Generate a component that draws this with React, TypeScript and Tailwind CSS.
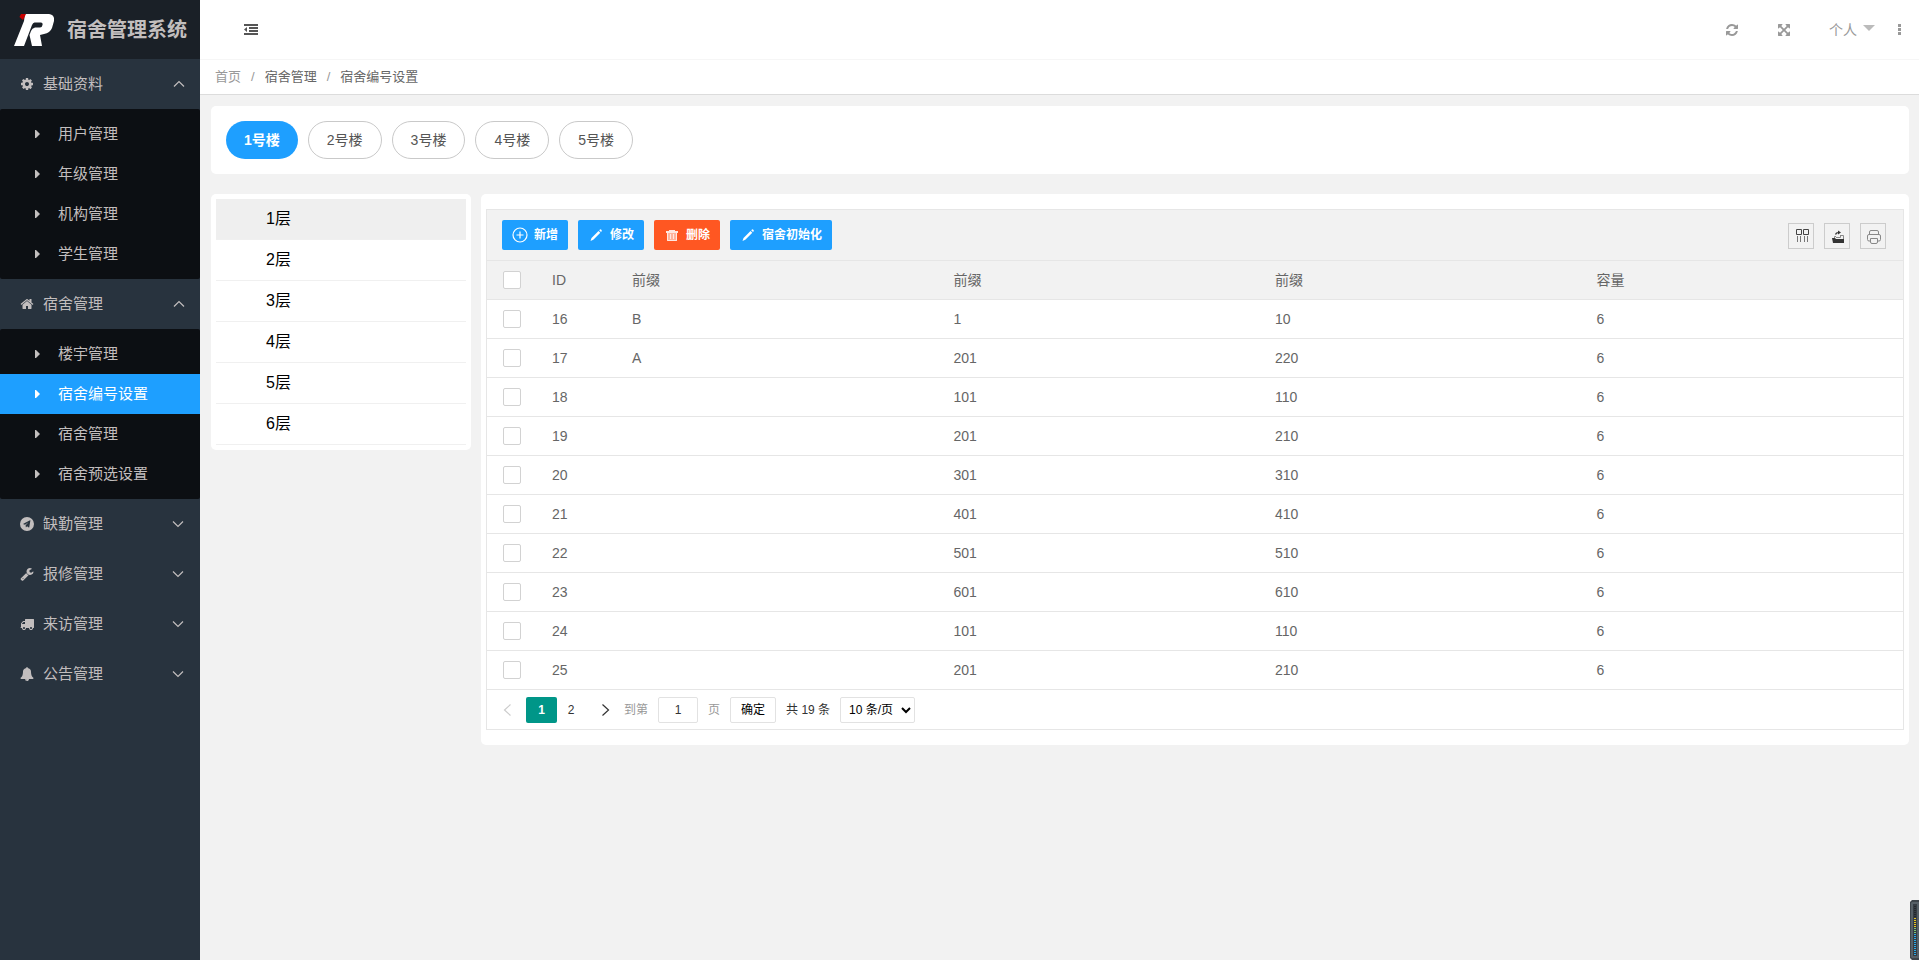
import React, { useState } from 'react';
import clsx from 'clsx';

const ICONS = {
  cog: 'M1152 896q0-106-75-181t-181-75-181 75-75 181 75 181 181 75 181-75 75-181zm512-109v222q0 12-8 23t-20 13l-185 28q-19 54-39 91 35 50 107 138 10 12 10 25t-9 23q-27 37-99 108t-94 71q-12 0-26-9l-138-108q-44 23-91 38-16 136-29 186-7 28-36 28h-222q-14 0-24.5-8.5t-11.5-21.5l-28-184q-49-16-90-37l-141 107q-10 9-25 9-14 0-25-11-126-114-165-168-7-10-7-23 0-12 8-23 15-21 51-66.5t54-70.5q-27-50-41-99l-183-27q-13-2-21-12.5t-8-23.5v-222q0-12 8-23t19-13l186-28q14-46 39-92-40-57-107-138-10-12-10-24 0-10 9-23 26-36 98.5-107.5t94.5-71.5q13 0 26 10l138 107q44-23 91-38 16-136 29-186 7-28 36-28h222q14 0 24.5 8.5t11.5 21.5l28 184q49 16 90 37l142-107q9-9 24-9 13 0 25 10 129 119 165 170 7 8 7 22 0 12-8 23-15 21-51 66.5t-54 70.5q26 50 41 98l183 28q13 2 21 12.5t8 23.5z',
  home: 'M1472 992v480q0 26-19 45t-45 19h-384v-384h-256v384h-384q-26 0-45-19t-19-45v-480q0-1 .5-3t.5-3l575-474 575 474q1 2 1 6zm223-69l-62 74q-8 9-21 11h-3q-13 0-21-7l-692-577-692 577q-12 8-24 7-13-2-21-11l-62-74q-8-10-7-23.5t11-21.5l719-599q32-26 76-26t76 26l244 204v-195q0-14 9-23t23-9h192q14 0 23 9t9 23v408l219 182q10 8 11 21.5t-7 23.5z',
  telegram: 'M896 0a896 896 0 1 0 0 1792a896 896 0 1 0 0-1792zM1330 450l-148 850q-10 57-62 30l-220-160-116 132q-30 22-42-22l-20-240 360-380-440 330-205-75q-40-18-2-50l850-445q52-24 45 30z',
  wrench: 'M448 1472q0-26-19-45t-45-19-45 19-19 45 19 45 45 19 45-19 19-45zm644-420l-682 682q-37 37-90 37-52 0-91-37l-106-108q-38-36-38-90 0-53 38-91l681-681q39 98 114.5 173.5t173.5 114.5zm634-435q0 39-23 106-47 134-164.5 217.5t-258.5 83.5q-185 0-316.5-131.5t-131.5-316.5 131.5-316.5 316.5-131.5q58 0 121.5 16.5t107.5 46.5q16 11 16 28t-16 28l-293 169v224l193 107q5-3 79-48.5t135.5-81 70.5-35.5q15 0 23.5 10t8.5 25z',
  truck: 'M640 1408q0-52-38-90t-90-38-90 38-38 90 38 90 90 38 90-38 38-90zm-384-512h384v-256h-158q-13 0-22 9l-195 195q-9 9-9 22v30zm1280 512q0-52-38-90t-90-38-90 38-38 90 38 90 90 38 90-38 38-90zm256-1088v1024q0 15-4 26.5t-13.5 18.5-16.5 11.5-23.5 6-22.5 2-25.5 0-22.5-.5q0 106-75 181t-181 75-181-75-75-181h-384q0 106-75 181t-181 75-181-75-75-181h-64q-3 0-22.5.5t-25.5 0-22.5-2-23.5-6-16.5-11.5-13.5-18.5-4-26.5q0-26 19-45t45-19v-320q0-8-.5-35t0-38 2.5-34.5 6.5-37 14-30.5 22.5-30l198-198q19-19 50.5-32t58.5-13h160v-192q0-26 19-45t45-19h1024q26 0 45 19t19 45z',
  bell: 'M912 1696q0-16-16-16-59 0-101.5-42.5t-42.5-101.5q0-16-16-16t-16 16q0 73 51.5 124.5t124.5 51.5q16 0 16-16zm816-288q0 52-38 90t-90 38h-448q0 106-75 181t-181 75-181-75-75-181h-448q-52 0-90-38t-38-90q50-42 91-88t85-119.5 74.5-158.5 50-206 19.5-260q0-152 117-282.5t307-158.5q-8-19-8-39 0-40 28-68t68-28 68 28 28 68q0 20-8 39 190 28 307 158.5t117 282.5q0 139 19.5 260t50 206 74.5 158.5 85 119.5 91 88z',
  refresh: 'M1639 1056q0 5-1 7-64 268-268 434.5t-478 166.5q-146 0-282.5-55t-243.5-157l-129 129q-19 19-45 19t-45-19-19-45v-448q0-26 19-45t45-19h448q26 0 45 19t19 45-19 45l-137 137q71 66 161 102t187 36q134 0 250-65t186-179q11-17 53-117 8-23 30-23h192q13 0 22.5 9.5t9.5 22.5zm25-800v448q0 26-19 45t-45 19h-448q-26 0-45-19t-19-45 19-45l138-138q-148-137-349-137-134 0-250 65t-186 179q-11 17-53 117-8 23-30 23h-199q-13 0-22.5-9.5t-9.5-22.5v-7q65-268 270-434.5t480-166.5q146 0 284 55.5t245 156.5l130-129q19-19 45-19t45 19 19 45z',
  arrows: 'M1411 541l-355 355 355 355 144-144q29-31 70-14 39 17 39 59v448q0 26-19 45t-45 19h-448q-42 0-59-40-17-39 14-69l144-144-355-355-355 355 144 144q31 30 14 69-17 40-59 40h-448q-26 0-45-19t-19-45v-448q0-42 40-59 39-17 69 14l144 144 355-355-355-355-144 144q-19 19-45 19-12 0-24-5-40-17-40-59v-448q0-26 19-45t45-19h448q42 0 59 40 17 39-14 69l-144 144 355 355 355-355-144-144q-31-30-14-69 17-40 59-40h448q26 0 45 19t19 45v448q0 42-39 59-13 5-25 5-26 0-45-19z',
};

type IconName = keyof typeof ICONS;

const Icon: React.FC<{ name: IconName; className?: string }> = ({ name, className }) => (
  <svg viewBox="0 0 1792 1792" fill="currentColor" fillRule="evenodd" className={clsx('size-[14px] shrink-0', className)} aria-hidden="true">
    <path d={ICONS[name]} />
  </svg>
);

const Chevron: React.FC<{ d: string; className?: string }> = ({ d, className }) => (
  <svg viewBox="0 0 12 12" fill="none" stroke="currentColor" strokeWidth="1.200" className={clsx('size-3 shrink-0', className)} aria-hidden="true">
    <path d={d} />
  </svg>
);

interface MenuGroup {
  label: string;
  icon: IconName;
  children?: string[];
}

const menu: MenuGroup[] = [
  { label: '基础资料', icon: 'cog', children: ['用户管理', '年级管理', '机构管理', '学生管理'] },
  { label: '宿舍管理', icon: 'home', children: ['楼宇管理', '宿舍编号设置', '宿舍管理', '宿舍预选设置'] },
  { label: '缺勤管理', icon: 'telegram' },
  { label: '报修管理', icon: 'wrench' },
  { label: '来访管理', icon: 'truck' },
  { label: '公告管理', icon: 'bell' },
];

const buildings = ['1号楼', '2号楼', '3号楼', '4号楼', '5号楼'];
const floors = ['1层', '2层', '3层', '4层', '5层', '6层'];

const rows = [
  { id: 16, prefix: 'B', start: 1, end: 10, size: 6 },
  { id: 17, prefix: 'A', start: 201, end: 220, size: 6 },
  { id: 18, prefix: '', start: 101, end: 110, size: 6 },
  { id: 19, prefix: '', start: 201, end: 210, size: 6 },
  { id: 20, prefix: '', start: 301, end: 310, size: 6 },
  { id: 21, prefix: '', start: 401, end: 410, size: 6 },
  { id: 22, prefix: '', start: 501, end: 510, size: 6 },
  { id: 23, prefix: '', start: 601, end: 610, size: 6 },
  { id: 24, prefix: '', start: 101, end: 110, size: 6 },
  { id: 25, prefix: '', start: 201, end: 210, size: 6 },
];

const Sidebar: React.FC = () => (
  <aside className="w-[200px] shrink-0 bg-[#28333e] text-[#c2bebe]">
    <div className="flex h-[59px] items-center gap-[13px] bg-[#1a2027] pl-[13px]">
      <svg viewBox="0 0 41 34" className="h-[34px] w-[41px] shrink-0" aria-hidden="true">
        <path
          fill="#fff"
          d="M12 1H36Q42 2 41 8L39 15Q37 20 31 21L27 22L29 33H19L16.500 22L18 18Q19 15 22 14.500H27Q29 14.500 29.500 12Q30 9.500 28 9.500H21.500Q20 9.500 19 12L11 33H1L11 8Z"
        />
        <path fill="#c80000" d="M8 1H13L10 7L6.500 4Z" />
      </svg>
      <h1 className="text-[20px] font-bold leading-none whitespace-nowrap">宿舍管理系统</h1>
    </div>
    <nav className="text-[15px]">
      {menu.map(({ label, icon, children }) => (
        <div key={label}>
          <a href="#" className="flex h-[50px] items-center pr-[15px] pl-5">
            <Icon name={icon} />
            <span className="ml-[9px] flex-1">{label}</span>
            <Chevron d={children ? 'M1 8.5L6 3.5L11 8.5' : 'M1 3.5L6 8.5L11 3.5'} className={children ? '' : 'mr-px'} />
          </a>
          {children && (
            <ul className="rounded-[2px] bg-[#0c0f13] py-[5px]">
              {children.map((child) => (
                <li key={child}>
                  <a
                    href="#"
                    className={clsx('flex h-10 items-center gap-[18px] pl-[35px]', child === '宿舍编号设置' && 'bg-[#1e9fff] text-white')}
                  >
                    <svg viewBox="0 0 5 8" fill="currentColor" className="h-2 w-[5px]" aria-hidden="true">
                      <path d="M0 0H1L5 4L1 8H0Z" />
                    </svg>
                    {child}
                  </a>
                </li>
              ))}
            </ul>
          )}
        </div>
      ))}
    </nav>
  </aside>
);

const Header: React.FC = () => (
  <header>
    <div className="flex h-[60px] items-center justify-between border-b border-[#f6f6f6] bg-white pr-[18px] pl-11 text-[#999]">
      <button aria-label="收起菜单" className="text-[#555]">
        <svg viewBox="0 0 14 11" fill="currentColor" className="h-[11px] w-[14px]" aria-hidden="true">
          <path d="M0 0H14V2H0ZM5 3H14V5H5ZM5 6H14V8H5ZM0 9H14V11H0ZM3 3V8L0 5.5Z" />
        </svg>
      </button>
      <div className="flex items-center text-sm">
        <button aria-label="刷新" className="mr-[38px]">
          <Icon name="refresh" />
        </button>
        <button aria-label="全屏" className="mr-[38px]">
          <Icon name="arrows" />
        </button>
        <button className="mr-[23px] flex items-center gap-[6px]">
          个人
          <svg viewBox="0 0 12 6" fill="#bbb" className="mb-[3px] h-[6px] w-3" aria-hidden="true">
            <path d="M0 0H12L6 6Z" />
          </svg>
        </button>
        <button aria-label="更多">
          <svg viewBox="0 0 3 11" fill="currentColor" className="h-[11px] w-[3px]" aria-hidden="true">
            <path d="M0 0H3V3H0ZM0 4H3V7H0ZM0 8H3V11H0Z" />
          </svg>
        </button>
      </div>
    </div>
    <nav className="flex h-[35px] items-center gap-[10px] border-b border-[#dcdcdc] bg-white pl-[15px] text-[13px] text-[#666]">
      <a href="#" className="text-[#999]">首页</a>
      <span className="text-[#999]">/</span>
      <a href="#">宿舍管理</a>
      <span className="text-[#999]">/</span>
      <span>宿舍编号设置</span>
    </nav>
  </header>
);

const PencilIcon = () => (
  <svg viewBox="0 0 16 16" fill="currentColor" className="mr-[6px] size-4" aria-hidden="true">
    <path d="M2.500 14L3.500 11L10.500 4L12.300 5.800L5.300 12.800ZM11.200 3.300L12.300 2.300Q13.700 2.300 13.900 3.900L13 5Z" />
  </svg>
);

const Toolbar: React.FC = () => {
  const btn = 'flex h-[30px] items-center rounded-[2px] px-[10px] text-xs font-semibold text-white';
  const tool = 'flex size-[26px] items-center justify-center border border-[#ccc]';
  return (
    <div className="flex items-center justify-between border-b border-[#e6e6e6] bg-[#f2f2f2] py-[10px] pr-[17px] pl-[15px]">
      <div className="flex gap-[10px]">
        <button className={clsx(btn, 'bg-[#1e9fff]')}>
          <svg viewBox="0 0 16 16" fill="none" stroke="currentColor" strokeWidth="1.200" className="mr-[6px] size-4" aria-hidden="true">
            <circle cx="8" cy="8" r="7" />
            <path d="M8 4.500V11.500M4.500 8H11.500" />
          </svg>
          新增
        </button>
        <button className={clsx(btn, 'bg-[#1e9fff]')}>
          <PencilIcon />
          修改
        </button>
        <button className={clsx(btn, 'bg-[#ff5722]')}>
          <svg viewBox="0 0 16 16" fill="currentColor" className="mr-[6px] size-4" aria-hidden="true">
            <path opacity="0.850" d="M5 3H11V4H14V6H2V4H5Z" />
            <path opacity="0.550" d="M3 6H13V14H3Z" />
            <path fill="none" stroke="currentColor" opacity="0.700" d="M3.500 6V13.500H12.500V6M6.500 7V12M9.500 7V12" />
          </svg>
          删除
        </button>
        <button className={clsx(btn, 'bg-[#1e9fff]')}>
          <PencilIcon />
          宿舍初始化
        </button>
      </div>
      <div className="flex gap-[10px] pt-[2px]">
        <button aria-label="筛选列" className={tool}>
          <svg viewBox="0 0 14 14" fill="none" stroke="#444" className="ml-[3px] size-[14px]" aria-hidden="true">
            <path d="M0.500 0.500H5.500V5.500H0.500ZM7.500 0.500H12.500V5.500H7.500Z" />
            <path stroke="#777" d="M1.500 7V13M4.500 7V13M8.500 7V13M11.500 7V13" />
          </svg>
        </button>
        <button aria-label="导出" className={tool}>
          <svg viewBox="0 0 14 14" fill="#333" className="ml-[2px] mt-px size-[14px]" aria-hidden="true">
            <path d="M1 8H4L5 9H13V13H2Z" />
            <path fill="none" stroke="#888" d="M3.500 8V6.500H5M9.500 5.500H12.500V9M5 7.500H9.500V5" />
            <path fill="none" stroke="#333" strokeWidth="1.200" d="M4.500 4.500Q5 2.500 8 2.500" />
            <path d="M7 0.500L10 2.500L7 4.500Z" />
          </svg>
        </button>
        <button aria-label="打印" className={tool}>
          <svg viewBox="0 0 14 14" fill="none" stroke="#888" className="ml-px mt-px size-[14px]" aria-hidden="true">
            <path d="M2.500 4.500V2Q2.500 0.500 4 0.500H10Q11.500 0.500 11.500 2V4.500M3 11H2Q0.500 11 0.500 9.500V6Q0.500 4.500 2 4.500H12Q13.500 4.500 13.500 6V9.500Q13.500 11 12 11H11M3.500 8.500H10.500V12Q10.500 13.500 9 13.500H5Q3.500 13.500 3.500 12Z" />
          </svg>
        </button>
      </div>
    </div>
  );
};

const Checkbox: React.FC<{ label: string }> = ({ label }) => (
  <input
    type="checkbox"
    aria-label={label}
    className="block size-[18px] appearance-none rounded-[2px] border border-[#d2d2d2] bg-white checked:border-[#5fb878] checked:bg-[#5fb878]"
  />
);

const DataTable: React.FC = () => {
  const cell = 'h-[39px] border-b border-[#e6e6e6] px-[15px] font-normal';
  const checkCell = 'h-[39px] border-b border-[#e6e6e6] pl-4';
  return (
    <table className="w-full table-fixed border-separate border-spacing-0 text-left text-sm text-[#666]">
      <colgroup>
        <col className="w-[50px]" />
        <col className="w-[80px]" />
        <col />
        <col />
        <col />
        <col />
      </colgroup>
      <thead className="bg-[#f2f2f2]">
        <tr>
          <th className={checkCell}>
            <Checkbox label="全选" />
          </th>
          {['ID', '前缀', '前缀', '前缀', '容量'].map((title, i) => (
            <th key={i} className={cell}>{title}</th>
          ))}
        </tr>
      </thead>
      <tbody>
        {rows.map((row) => (
          <tr key={row.id}>
            <td className={checkCell}>
              <Checkbox label={`选择 ${row.id}`} />
            </td>
            <td className={cell}>{row.id}</td>
            <td className={cell}>{row.prefix}</td>
            <td className={cell}>{row.start}</td>
            <td className={cell}>{row.end}</td>
            <td className={cell}>{row.size}</td>
          </tr>
        ))}
      </tbody>
    </table>
  );
};

const Pagination: React.FC = () => {
  const [page, setPage] = useState('1');
  return (
    <div className="flex h-[39px] items-center pl-[14px] text-xs text-[#333]">
      <button aria-label="上一页" className="mr-[13px] text-[#ccc]">
        <Chevron d="M9.500 0.500L3.500 6L9.500 11.500" />
      </button>
      <button className="h-[26px] w-[31px] rounded-[2px] bg-[#009688] font-semibold text-white">1</button>
      <button className="h-[26px] w-7">2</button>
      <button aria-label="下一页" className="ml-[14px]">
        <Chevron d="M3.500 0.500L9.500 6L3.500 11.500" />
      </button>
      <label className="ml-[13px] flex items-center gap-[10px] text-[#999]">
        到第
        <input
          value={page}
          onChange={(e) => setPage(e.target.value)}
          className="h-[26px] w-10 rounded-[2px] border border-[#e2e2e2] text-center text-[#333]"
        />
        页
      </label>
      <button className="ml-[10px] h-[26px] rounded-[2px] border border-[#e2e2e2] px-[10px] text-black">确定</button>
      <span className="mx-[10px]">共 19 条</span>
      <select aria-label="每页条数" className="h-[26px] w-[75px] rounded-[2px] border border-[#e2e2e2] bg-white pl-1 text-black">
        <option>10 条/页</option>
        <option>20 条/页</option>
        <option>30 条/页</option>
      </select>
    </div>
  );
};

// Floating audio level widget docked to the window corner
const LevelMeter: React.FC = () => (
  <div className="fixed right-0 bottom-0">
    <svg viewBox="0 0 9 60" className="h-[60px] w-[9px]" aria-hidden="true">
      <path fill="#3d444a" d="M2 0H9V60H2L0 58V2Z" />
      <path fill="#566067" d="M2 2H9V58H2L1 57V3Z" />
      <rect x="3" y="4" width="4" height="52" fill="#343b42" />
      <path stroke="#23282d" strokeWidth="2" strokeDasharray="1 1" d="M5 6V18" />
      <path stroke="#e8c520" strokeWidth="2" strokeDasharray="1 1" d="M5 18V27" />
      <path stroke="#7cc576" strokeWidth="2" strokeDasharray="1 1" d="M5 28V33" />
      <path stroke="#29a9e6" strokeWidth="2" strokeDasharray="1 1" d="M5 34V55" />
    </svg>
  </div>
);

const App: React.FC = () => {
  const [building, setBuilding] = useState(buildings[0]);
  const [floor, setFloor] = useState(floors[0]);

  return (
    <div className="flex min-h-screen bg-[#f2f2f2] font-['Liberation_Sans','Noto_Sans_CJK_SC',sans-serif]">
      <Sidebar />
      <div className="min-w-0 flex-1">
        <Header />
        <main className="px-[10px] pt-[11px] pl-[11px]">
          {/* Buildings */}
          <section className="flex gap-[10px] rounded-[5px] bg-white p-[15px]">
            {buildings.map((name) => (
              <button
                key={name}
                onClick={() => setBuilding(name)}
                className={clsx(
                  'h-[38px] rounded-full px-[18px] text-sm',
                  name === building ? 'bg-[#1e9fff] font-semibold text-white' : 'border border-[#c9c9c9] bg-white text-[#555]'
                )}
              >
                {name}
              </button>
            ))}
          </section>

          <div className="mt-5 flex items-start gap-[10px]">
            {/* Floors */}
            <ul className="w-[260px] shrink-0 rounded-[5px] bg-white p-[5px] text-base">
              {floors.map((name) => (
                <li key={name} className="border-b border-[#f0f0f0]">
                  <button
                    onClick={() => setFloor(name)}
                    className={clsx('block h-10 w-full pl-[50px] text-left text-black', name === floor && 'bg-[#efefef]')}
                  >
                    {name}
                  </button>
                </li>
              ))}
            </ul>

            {/* Room numbers */}
            <section className="min-w-0 flex-1 rounded-[5px] bg-white px-[5px] py-[15px]">
              <div className="border border-[#e6e6e6]">
                <Toolbar />
                <DataTable />
                <Pagination />
              </div>
            </section>
          </div>
        </main>
      </div>
      <LevelMeter />
    </div>
  );
};

export default App;
